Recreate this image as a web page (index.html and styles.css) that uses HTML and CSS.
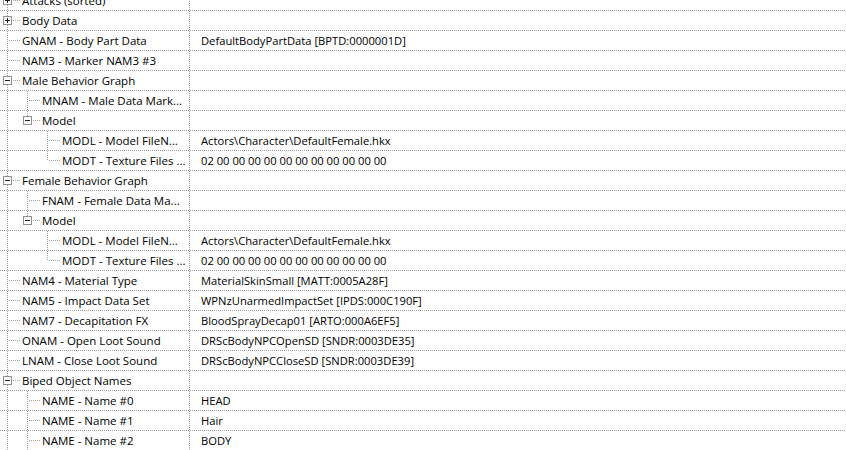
FILE: index.html
```html
<!DOCTYPE html>
<html>
<head>
<meta charset="utf-8">
<link rel="stylesheet" href="styles.css">
</head>
<body>
<div class="tree">
  <div class="row">
    <div class="name"><span class="g tee"><span class="box plus"></span></span><span class="label">Attacks (sorted)</span></div>
    <div class="val"></div>
  </div>
  <div class="row">
    <div class="name"><span class="g tee"><span class="box plus"></span></span><span class="label">Body Data</span></div>
    <div class="val"></div>
  </div>
  <div class="row">
    <div class="name"><span class="g tee"></span><span class="label">GNAM - Body Part Data</span></div>
    <div class="val">DefaultBodyPartData [BPTD:0000001D]</div>
  </div>
  <div class="row">
    <div class="name"><span class="g tee"></span><span class="label">NAM3 - Marker NAM3 #3</span></div>
    <div class="val"></div>
  </div>
  <div class="row">
    <div class="name"><span class="g tee"><span class="box"></span></span><span class="label">Male Behavior Graph</span></div>
    <div class="val"></div>
  </div>
  <div class="row">
    <div class="name"><span class="g line"></span><span class="g tee"></span><span class="label">MNAM - Male Data Mark...</span></div>
    <div class="val"></div>
  </div>
  <div class="row">
    <div class="name"><span class="g line"></span><span class="g end"><span class="box"></span></span><span class="label">Model</span></div>
    <div class="val"></div>
  </div>
  <div class="row">
    <div class="name"><span class="g line"></span><span class="g"></span><span class="g tee"></span><span class="label">MODL - Model FileN...</span></div>
    <div class="val">Actors\Character\DefaultFemale.hkx</div>
  </div>
  <div class="row">
    <div class="name"><span class="g line"></span><span class="g"></span><span class="g end"></span><span class="label">MODT - Texture Files ...</span></div>
    <div class="val">02 00 00 00 00 00 00 00 00 00 00 00</div>
  </div>
  <div class="row">
    <div class="name"><span class="g tee"><span class="box"></span></span><span class="label">Female Behavior Graph</span></div>
    <div class="val"></div>
  </div>
  <div class="row">
    <div class="name"><span class="g line"></span><span class="g tee"></span><span class="label">FNAM - Female Data Ma...</span></div>
    <div class="val"></div>
  </div>
  <div class="row">
    <div class="name"><span class="g line"></span><span class="g end"><span class="box"></span></span><span class="label">Model</span></div>
    <div class="val"></div>
  </div>
  <div class="row">
    <div class="name"><span class="g line"></span><span class="g"></span><span class="g tee"></span><span class="label">MODL - Model FileN...</span></div>
    <div class="val">Actors\Character\DefaultFemale.hkx</div>
  </div>
  <div class="row">
    <div class="name"><span class="g line"></span><span class="g"></span><span class="g end"></span><span class="label">MODT - Texture Files ...</span></div>
    <div class="val">02 00 00 00 00 00 00 00 00 00 00 00</div>
  </div>
  <div class="row">
    <div class="name"><span class="g tee"></span><span class="label">NAM4 - Material Type</span></div>
    <div class="val">MaterialSkinSmall [MATT:0005A28F]</div>
  </div>
  <div class="row">
    <div class="name"><span class="g tee"></span><span class="label">NAM5 - Impact Data Set</span></div>
    <div class="val">WPNzUnarmedImpactSet [IPDS:000C190F]</div>
  </div>
  <div class="row">
    <div class="name"><span class="g tee"></span><span class="label">NAM7 - Decapitation FX</span></div>
    <div class="val">BloodSprayDecap01 [ARTO:000A6EF5]</div>
  </div>
  <div class="row">
    <div class="name"><span class="g tee"></span><span class="label">ONAM - Open Loot Sound</span></div>
    <div class="val">DRScBodyNPCOpenSD [SNDR:0003DE35]</div>
  </div>
  <div class="row">
    <div class="name"><span class="g tee"></span><span class="label">LNAM - Close Loot Sound</span></div>
    <div class="val">DRScBodyNPCCloseSD [SNDR:0003DE39]</div>
  </div>
  <div class="row">
    <div class="name"><span class="g tee"><span class="box"></span></span><span class="label">Biped Object Names</span></div>
    <div class="val"></div>
  </div>
  <div class="row">
    <div class="name"><span class="g line"></span><span class="g tee"></span><span class="label">NAME - Name #0</span></div>
    <div class="val">HEAD</div>
  </div>
  <div class="row">
    <div class="name"><span class="g line"></span><span class="g tee"></span><span class="label">NAME - Name #1</span></div>
    <div class="val">Hair</div>
  </div>
  <div class="row">
    <div class="name"><span class="g line"></span><span class="g tee"></span><span class="label">NAME - Name #2</span></div>
    <div class="val">BODY</div>
  </div>
</div>
</body>
</html>
```
FILE: styles.css
```css
html, body {
  margin: 0;
  padding: 0;
  background: #ffffff;
  overflow: hidden;
}

.tree {
  margin-top: -9px;
  font-family: "Open Sans", "Noto Sans", sans-serif;
  font-size: 11.5px;
  color: #000000;
}

.row {
  display: flex;
  height: 20px;
  box-sizing: border-box;
  background-image: repeating-linear-gradient(to right, #a0a0a0 0 1px, transparent 1px 2px);
  background-size: 100% 1px;
  background-repeat: no-repeat;
  background-position: 0 100%;
}

.name {
  width: 189px;
  flex: none;
  height: 19px;
  display: flex;
  align-items: stretch;
  overflow: hidden;
  white-space: nowrap;
}

.val {
  flex: 1;
  height: 19px;
  line-height: 19px;
  padding-left: 12px;
  white-space: nowrap;
  position: relative;
  font-size: 11.2px;
}

.val::before {
  content: "";
  position: absolute;
  left: 0;
  top: 0;
  bottom: -1px;
  width: 1px;
  background: repeating-linear-gradient(to bottom, #a0a0a0 0 1px, transparent 1px 2px);
}

.label {
  margin-left: 2px;
  line-height: 19px;
}

.g {
  width: 20px;
  flex: none;
  position: relative;
}

.g.line::before,
.g.tee::before,
.g.end::before {
  content: "";
  position: absolute;
  left: 7px;
  top: 0;
  bottom: -1px;
  width: 1px;
  background: repeating-linear-gradient(to bottom, #a0a0a0 0 1px, transparent 1px 2px);
}

.g.end::before {
  bottom: auto;
  height: 10px;
}

.g.tee::after,
.g.end::after {
  content: "";
  position: absolute;
  left: 9px;
  width: 11px;
  top: 9px;
  height: 1px;
  background: repeating-linear-gradient(to right, #a0a0a0 0 1px, transparent 1px 2px);
}

.box {
  position: absolute;
  left: 3px;
  top: 5px;
  width: 9px;
  height: 9px;
  box-sizing: border-box;
  border: 1px solid #919191;
  background: #ffffff;
  z-index: 1;
}

.box::before {
  content: "";
  position: absolute;
  left: 1px;
  top: 3px;
  width: 5px;
  height: 1px;
  background: #1f1f1f;
}

.box.plus::after {
  content: "";
  position: absolute;
  left: 3px;
  top: 1px;
  width: 1px;
  height: 5px;
  background: #1f1f1f;
}
```
